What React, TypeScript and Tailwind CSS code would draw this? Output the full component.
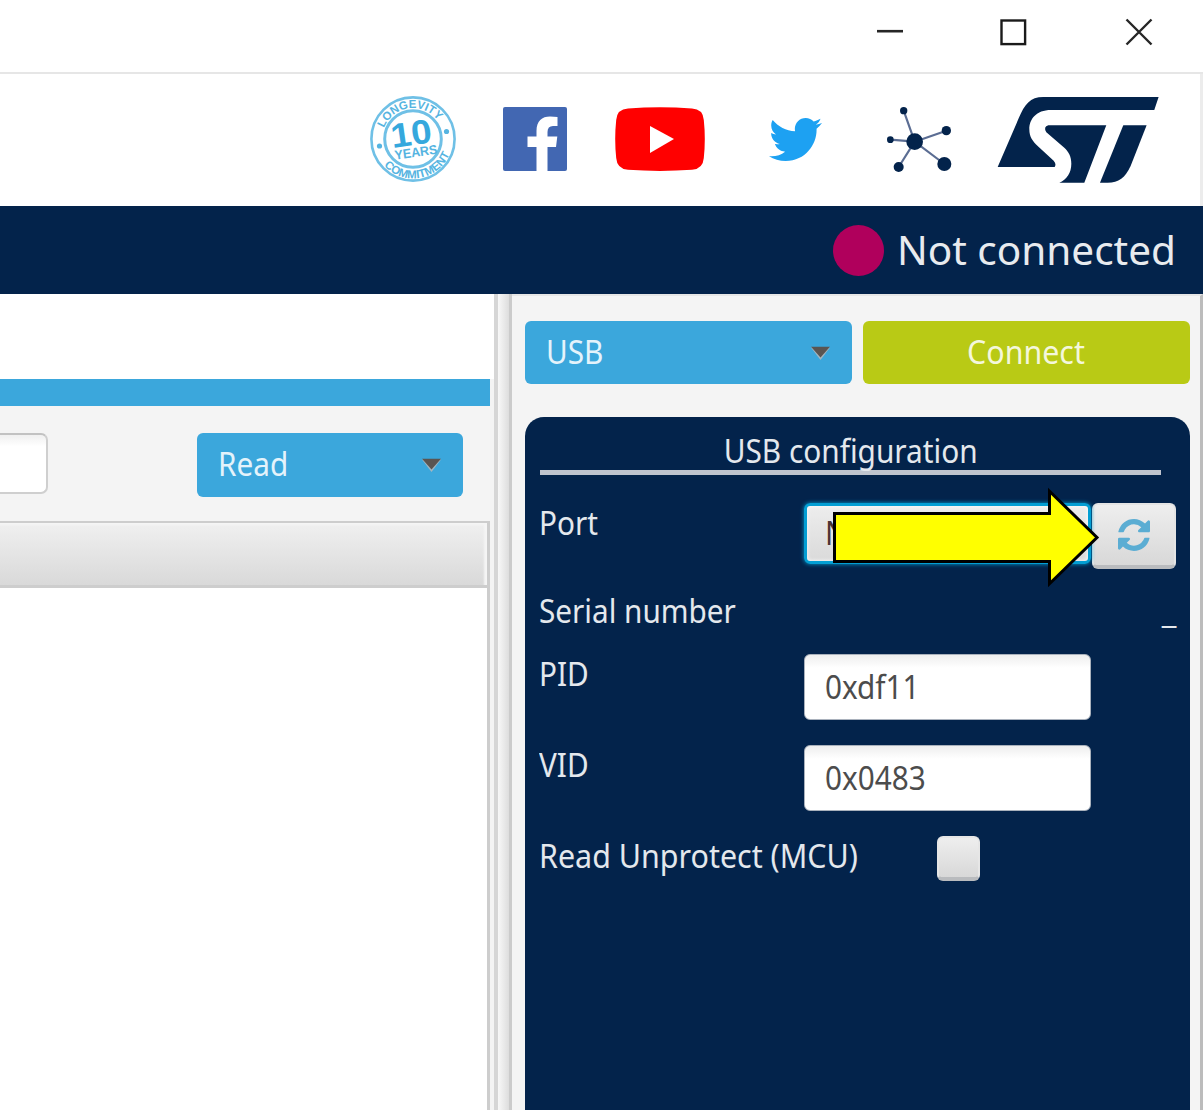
import React from "react";
import { FaTwitter } from "react-icons/fa";

const label =
  "inline-block origin-left scale-x-[0.9] whitespace-nowrap text-[33px] leading-[44px]";

function TitleBar() {
  return (
    <div className="flex h-[74px] shrink-0 justify-end border-b-2 border-[#e6e6e6] bg-white pt-[18px] pr-[50px]">
      <svg width="28" height="28" className="mr-[95px]">
        <path d="M1 13.200H27" stroke="#262626" strokeWidth="2.6" />
      </svg>
      <svg width="28" height="28" className="mr-[98px]">
        <rect x="2.5" y="2.5" width="23.6" height="23.6" fill="none" stroke="#1a1a1a" strokeWidth="2.4" />
      </svg>
      <svg width="28" height="28">
        <path d="M1.5 1.5L26.5 26.5M26.5 1.5L1.5 26.5" stroke="#262626" strokeWidth="2.4" />
      </svg>
    </div>
  );
}

function LongevitySeal() {
  return (
    <svg width="88" height="88" viewBox="-44 -44 88 88" className="mr-[46px]">
      <defs>
        <path id="sealTop" d="M-31 0A31 31 0 0 1 31 0" />
        <path id="sealBottom" d="M-39.5 0A39.5 39.5 0 0 0 39.5 0" />
      </defs>
      <g fill="none" stroke="#6fc0e6">
        <circle r="41.6" strokeWidth="2.6" />
        <circle r="28.3" strokeWidth="3" />
      </g>
      <g fill="#55b4e1" fontFamily="Liberation Sans" fontWeight="700" textAnchor="middle">
        <g transform="rotate(-8)">
          <text fontSize="11.5">
            <textPath href="#sealTop" startOffset="50%">LONGEVITY</textPath>
          </text>
        </g>
        <g transform="rotate(-10)">
          <text fontSize="11.5">
            <textPath href="#sealBottom" startOffset="50%">COMMITMENT</textPath>
          </text>
        </g>
        <g transform="rotate(-8)">
          <text x="-1" y="6" fontSize="34" fill="#35a8dd" textLength="41" lengthAdjust="spacingAndGlyphs">10</text>
          <text x="1" y="18" fontSize="13" textLength="43" lengthAdjust="spacingAndGlyphs">YEARS</text>
        </g>
      </g>
      <circle cx="33.5" cy="-7.5" r="2.6" fill="#55b4e1" />
      <circle cx="-33.5" cy="7" r="2.6" fill="#55b4e1" />
    </svg>
  );
}

function SocialBar() {
  return (
    <div className="flex h-[132px] shrink-0 items-start justify-end border-r-[3px] border-[#ececec] bg-white pr-[41px]">
      <div className="flex h-[130px] items-center">
        <LongevitySeal />
        <svg width="64" height="64" viewBox="0 0 64 64" className="mr-[48px]">
          <rect width="64" height="64" rx="2" fill="#4267b2" />
          <path d="M33.5 64V40H24.5V29.5H33.5V24C33.5 14 39 9.5 47 9.5Q51 9.5 54.5 10V19H50Q44.500 19 44.500 25V29.500H54.300L53 40H44.500V64Z" fill="#fff" />
        </svg>
        <svg width="90" height="64" viewBox="0 0 90 64" className="mr-[64px]">
          <path d="M13 1.500Q45-0.800 77 1.500Q88 2 88.800 13Q90.800 32 88.800 51Q88 62 77 62.800Q45 65 13 62.800Q2 62 1.200 51Q-0.800 32 1.200 13Q2 2 13 1.500Z" fill="#ff0000" />
          <path d="M35 19L59 32L35 46Z" fill="#fff" />
        </svg>
        <FaTwitter className="mr-[64px] size-[53px] text-[#1da1f2]" />
        <svg width="66" height="66" viewBox="46 78 198 198" className="mr-[44px]">
          <path d="M132 185L99 92M132 185L59 179M132 185L227 152M132 185L84 261M132 185L221 252" stroke="#5b6d93" strokeWidth="6.500" />
          <g fill="#03234b">
            <circle cx="132" cy="185" r="25" />
            <circle cx="99" cy="92" r="11" />
            <circle cx="59" cy="179" r="10" />
            <circle cx="227" cy="152" r="14" />
            <circle cx="84" cy="261" r="15" />
            <circle cx="221" cy="252" r="21" />
          </g>
        </svg>
        <svg width="163.300" height="88.300" viewBox="380 45 490 265" fill="#03234b" className="mt-[2px]">
          <path d="M385 258L448 112C466 70 482 48 522 48H868L855 87H545C500 87 480 115 480 145C480 168 490 181 505 195L553 239Q562 249 556 258Z" />
          <path d="M537 133H711L645 305H570C592 296 606 276 606 248C606 226 598 212 585 200L531 154Q521 137 537 133Z" />
          <path d="M762 133H832L784 255C768 290 748 305 715 305H692Z" />
        </svg>
      </div>
    </div>
  );
}

function Caret() {
  return (
    <svg width="21" height="14" viewBox="0 0 21 14">
      <path d="M1 1.500H20L10.500 14Z" fill="#a5b6bf" />
      <path d="M1 0.800H20L10.500 11.500Z" fill="#5a5552" />
    </svg>
  );
}

function MemoryPane() {
  return (
    <div className="flex w-[494px] shrink-0 flex-col bg-[#f4f4f4]">
      <div className="h-[85px] bg-white" />
      <div className="mr-[4px] h-[27px] bg-[#3ba7dc]" />
      <div className="flex h-[115px] items-start pt-[27px]">
        <div className="h-[61px] w-[48px] rounded-r-[7px] border-[2.500px] border-l-0 border-[#cfcfcf] border-t-[#c2c2c2] bg-linear-to-b from-[#f0f0f0] to-white to-20%" />
        <div className="ml-[149px] flex h-[64px] w-[266px] items-center justify-between rounded-[6px] bg-[#3ba7dc] pr-[21px] pl-[21px]">
          <span className={label + " -mt-[2px] text-[#e4f3fb]"}>Read</span>
          <Caret />
        </div>
      </div>
      <div className="mr-[4px] flex grow flex-col border-t-[2px] border-r-[3px] border-[#cdcdcd] bg-white">
        <div className="h-[65px] border-b-[3px] border-[#cdcdcd] bg-linear-to-b from-[#f0f0f0] to-[#d9d9d9] shadow-[inset_-3px_2px_2px_#f5f5f5]" />
      </div>
    </div>
  );
}

function FieldRow(props: { name: string; value: string }) {
  return (
    <div className="flex items-start">
      <span className="-mt-[2px] w-[265px]">
        <span className={label + " text-[#e4e8ed]"}>{props.name}</span>
      </span>
      <div className="flex h-[66px] w-[287px] items-center rounded-[6px] border border-[#a9b1bc] bg-linear-to-b from-[#eeeeee] to-white to-20% pl-[20px]">
        <span className={label + " text-[#4c4c4c]"}>{props.value}</span>
      </div>
    </div>
  );
}

function ConfigPanel() {
  return (
    <div className="mt-[33px] flex w-[665px] grow flex-col rounded-t-[19px] bg-[#03234b] pt-[12px] pl-[14px] text-[#e4e8ed]">
      <div className="flex h-[41px] justify-center pr-[26px]">
        <span className="inline-block scale-x-[0.903] text-[33px] leading-[44px] whitespace-nowrap">USB configuration</span>
      </div>
      <div className="ml-[1px] h-[5px] w-[621px] bg-[#c0c5cf]" />
      <div className="mt-[28px] flex h-[87px] items-start">
        <span className="-mt-[2px] w-[265px]">
          <span className={label}>Port</span>
        </span>
        <div className="relative flex h-[61px] w-[287px] items-center rounded-[6px] border-[3px] border-[#039ed3] bg-linear-to-b from-[#ededed] to-[#dadada] pl-[18px] shadow-[0_0_4px_#039ed3,inset_0_0_4px_#ffffff]">
          <span className={label + " -mt-[2px] text-[#4c3434]"}>N</span>
          <svg width="272" height="108" viewBox="0 0 272 108" className="absolute top-[-22px] left-[24px] z-10">
            <path d="M3.500 29.500H218.500V7.200L266 53.500L218.500 99.800V77.500H3.500Z" fill="#ffff00" stroke="#000" strokeWidth="3" />
          </svg>
        </div>
        <div className="ml-[1px] flex h-[66px] w-[84px] items-center justify-center rounded-[6px] border-2 border-b-4 border-[#e4e4e4] border-b-[#b9bbbe] bg-linear-to-b from-[#eeeeee] to-[#d8d8d8]">
          <svg width="32" height="32" viewBox="0 0 1536 1536" fill="#5badd3">
            <path d="M1511 928q0 5-1 7-64 268-268 434.500t-478 166.500q-146 0-282.500-55t-243.500-157l-129 129q-19 19-45 19t-45-19-19-45v-448q0-26 19-45t45-19h448q26 0 45 19t19 45-19 45l-137 137q71 66 161 102t187 36q134 0 250-65t186-179q11-17 53-117 8-23 30-23h192q13 0 22.500 9.500t9.500 22.500zm25-800v448q0 26-19 45t-45 19h-448q-26 0-45-19t-19-45 19-45l138-138q-148-137-349-137-134 0-250 65t-186 179q-11 17-53 117-8 23-30 23h-199q-13 0-22.500-9.500t-9.500-22.500v-7q65-268 270-434.500t480-166.500q146 0 284 55.500t245 156.500l130-129q19-19 45-19t45 19 19 45z" />
          </svg>
        </div>
      </div>
      <div className="-mt-[1px] flex h-[65px] justify-between pr-[13px]">
        <span className={label}>Serial number</span>
        <span className="text-[33px] leading-[44px]">_</span>
      </div>
      <div className="flex flex-col gap-[25px]">
        <FieldRow name="PID" value="0xdf11" />
        <FieldRow name="VID" value="0x0483" />
      </div>
      <div className="mt-[23px] flex">
        <span className="w-[398px]">
          <span className="inline-block origin-left scale-x-[0.922] text-[33px] leading-[44px] whitespace-nowrap">Read Unprotect (MCU)</span>
        </span>
        <div className="mt-[2px] h-[45px] w-[43px] rounded-[6px] border-[2.500px] border-b-4 border-[#e6e6e6] border-b-[#b9bbbe] bg-linear-to-b from-[#eeeeee] to-[#d8d8d8]" />
      </div>
    </div>
  );
}

export default function App() {
  return (
    <div className="flex h-[1110px] w-[1203px] flex-col overflow-hidden bg-white font-['Noto_Sans',sans-serif]">
      <TitleBar />
      <SocialBar />
      <div className="flex h-[88px] shrink-0 items-center justify-end bg-[#03234b] pr-[27px]">
        <span className="mr-[13px] size-[51px] rounded-full bg-[#b0005c]" />
        <span className="-mt-[1px] text-[40.500px] leading-[54px] text-[#e8ebef]">Not connected</span>
      </div>
      <div className="flex min-h-0 grow">
        <MemoryPane />
        <div className="w-[18px] shrink-0 border-r-[3px] border-l-[4px] border-r-[#cbcbcb] border-l-[#d6d6d6] bg-linear-to-r from-[#f8f8f8] to-[#dddddd]" />
        <div className="flex grow flex-col border-t-2 border-r-[3px] border-[#e6e6e6] border-r-[#bcbcbc] bg-[#f4f4f4] pt-[25px] pl-[12.500px]">
          <div className="flex h-[63px] shrink-0 gap-[11px]">
            <div className="flex w-[327px] items-center justify-between rounded-[6px] bg-[#3ba7dc] pr-[21px] pl-[21px]">
              <span className={label + " -mt-[2px] text-[#e4f3fb]"}>USB</span>
              <Caret />
            </div>
            <div className="flex w-[327px] items-center justify-center rounded-[6px] bg-[#b9ca15]">
              <span className="-mt-[2px] inline-block scale-x-[0.92] text-[33px] leading-[44px] text-[#f4f7dc]">Connect</span>
            </div>
          </div>
          <ConfigPanel />
        </div>
      </div>
    </div>
  );
}
